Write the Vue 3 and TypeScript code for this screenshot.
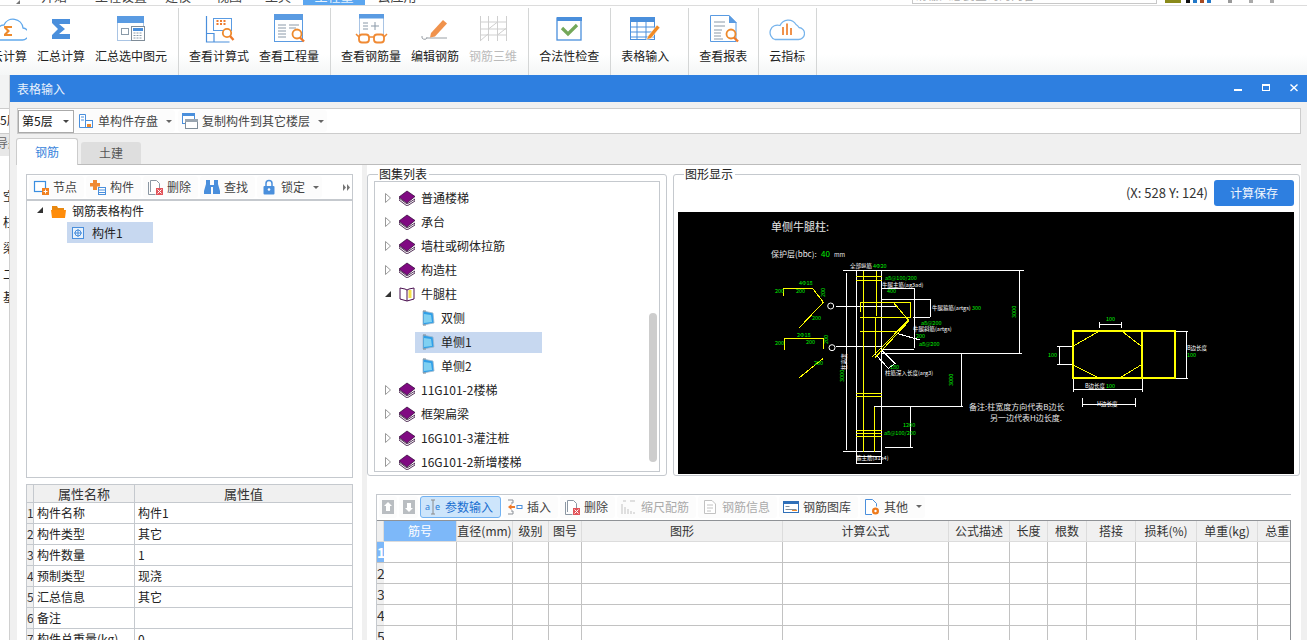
<script setup lang="ts">
const menu = [
  { t: '开始', w: 58 }, { t: '工程设置', w: 76 }, { t: '建模', w: 38 }, { t: '视图', w: 64 },
  { t: '工具', w: 34 }, { t: '工程量', w: 62, active: true }, { t: '云应用', w: 64 },
]
const sideChars = [
  { c: '空', k: 'a' }, { c: '柱', k: 'b' }, { c: '梁', k: 'c' }, { c: '二', k: 'd' }, { c: '基', k: 'e' },
]
const tree = [
  { t: '普通楼梯' }, { t: '承台' }, { t: '墙柱或砌体拉筋' }, { t: '构造柱' },
  { t: '牛腿柱', open: true },
  { t: '双侧', child: true }, { t: '单侧1', child: true, sel: true }, { t: '单侧2', child: true },
  { t: '11G101-2楼梯' }, { t: '框架扁梁' }, { t: '16G101-3灌注桩' }, { t: '16G101-2新增楼梯' },
]
const props = [
  ['构件名称', '构件1'], ['构件类型', '其它'], ['构件数量', '1'], ['预制类型', '现浇'],
  ['汇总信息', '其它'], ['备注', ''], ['构件总重量(kg)', '0'],
]
const cols = ['筋号', '直径(mm)', '级别', '图号', '图形', '计算公式', '公式描述', '长度', '根数', '搭接', '损耗(%)', '单重(kg)', '总重(kg)']
const rows = [1, 2, 3, 4, 5]

// CAD geometry is measured on the reference at 3x, relative to an origin
const conv = (ox: number, oy: number, p: number[]) => {
  const out: string[] = []
  for (let i = 0; i < p.length; i += 2) out.push(`${ox + p[i] / 3},${oy + p[i + 1] / 3}`)
  return out.join(' ')
}
const A = (p: number[]) => conv(750, 205, p)
const B = (p: number[]) => conv(1040, 170, p)
const white = [
  A([280,197,822,197]), A([808,197,808,445]), A([395,445,815,445]), A([290,203,290,735]), A([280,740,395,740]),
  A([319,197,319,775]), A([395,197,395,775]), A([319,755,395,755]), A([319,775,395,775]),
  A([395,250,493,250,493,430]), A([395,433,493,433]), A([395,283,540,283,540,335]), A([490,337,540,337]),
  A([258,303,440,303]), A([258,424,395,424]), A([440,385,510,405]), A([395,435,435,475,415,490,375,447]),
  A([373,605,640,605]), A([634,445,634,605]), A([481,605,481,727]), A([405,727,488,727]),
  B([178,463,244,463]), B([178,455,178,475]), B([244,455,244,475]),
  B([52,528,100,528]), B([52,582,100,582]), B([58,528,58,582]),
  B([408,484,445,484]), B([408,624,445,624]), B([440,484,440,624]),
  B([100,658,307,658]), B([100,626,100,665]), B([307,626,307,665]),
  B([128,703,287,703]), B([128,685,128,710]), B([287,685,287,710]),
]
const yellow = [
  A([341,197,341,740]), A([379,197,379,332]), A([376,335,376,445]), A([373,605,373,740]),
  A([319,215,395,215]), A([319,225,395,225]), A([319,565,395,565]), A([319,575,395,575]),
  A([319,675,395,675]), A([319,685,395,685]), A([319,695,395,695]),
  A([331,322,331,292,482,292,482,340]), A([331,338,482,338]), A([331,380,440,380]),
  A([430,292,475,345,368,455]), A([478,347,375,458]),
  A([100,272,100,250,188,250,220,292,148,368]), A([103,435,103,400,220,400,220,432]), A([220,460,148,518]),
  B([100,528,175,485]), B([248,485,303,528]), B([100,585,175,623]), B([240,623,303,585]),
]
const g = 'lg'
const w = 'lw'
const labels = [
  { x: 850, y: 268, c: w, t: '全部纵筋' }, { x: 873, y: 268, c: g, t: '4Φ20' },
  { x: 885, y: 280, c: g, t: 'a8@100/200' }, { x: 882, y: 287, c: w, t: '牛腿主筋(ag3ad)' },
  { x: 887, y: 293, c: g, t: '400' }, { x: 932, y: 310, c: w, t: '牛腿箍筋(artgs)' }, { x: 972, y: 310, c: g, t: '300' },
  { x: 921, y: 325, c: g, t: 'a8@200' }, { x: 913, y: 331, c: w, t: '牛腿斜筋(artgs)' },
  { x: 916, y: 338, c: g, t: '200' }, { x: 919, y: 346, c: g, t: 'a8@200' },
  { x: 885, y: 375, c: w, t: '柱筋深入长度(arg3)' }, { x: 890, y: 369, c: g, t: '180' },
  { x: 903, y: 427, c: g, t: '1200' }, { x: 884, y: 435, c: g, t: 'a8@100/200' }, { x: 856, y: 460, c: w, t: '箍主筋(a1a4)' },
  { x: 799, y: 285, c: g, t: '4Φ18' }, { x: 775, y: 293, c: g, t: '200' }, { x: 796, y: 293, c: g, t: '200' },
  { x: 812, y: 320, c: g, t: '200' }, { x: 797, y: 337, c: g, t: '2Φ18' }, { x: 775, y: 345, c: g, t: '200' },
  { x: 806, y: 344, c: g, t: '200' }, { x: 814, y: 365, c: g, t: '200' },
  { x: 1106, y: 321, c: g, t: '100' }, { x: 1048, y: 357, c: g, t: '100' }, { x: 1187, y: 350, c: w, t: 'B边长度' },
  { x: 1187, y: 357, c: g, t: '100' }, { x: 1085, y: 388, c: w, t: 'B边长度' }, { x: 1106, y: 388, c: g, t: '100' },
  { x: 1097, y: 406, c: w, t: 'H边长度' },
]
const vlabels = [
  { x: 1016, y: 318, c: g, t: '3000' }, { x: 953, y: 386, c: g, t: '3000' }, { x: 844, y: 382, c: g, t: '3000' },
  { x: 846, y: 370, c: w, t: '柱高度' }, { x: 825, y: 297, c: g, t: '200' }, { x: 828, y: 344, c: g, t: '200' },
]
</script>

<template>
  <div class="app">
    <div class="menu">
      <div class="corner"><i></i></div>
      <div v-for="m in menu" :key="m.t" class="mtab" :class="{ on: m.active }" :style="{ width: m.w + 'px' }"><span>{{ m.t }}</span></div>
      <div class="search"><span>请输入想要查询的内容</span></div>
      <div class="tray"><i class="o"></i><i class="k"></i><i class="b"></i><i class="r"></i><i class="b"></i><i class="g"></i><i class="g2"></i><i class="g2"></i></div>
    </div>

    <div class="ribbon">
      <section class="rgroup">
        <div class="ri"><svg width="36" height="32" viewBox="0 0 36 32"><path d="M7 27h24a6 6 0 0 0 1-12 10 10 0 0 0-19-3 7 7 0 0 0-5 2 7 7 0 0 0-1 13z" fill="#fff" stroke="#62a9ec" stroke-width="1.3"/><path d="M13 13h8v2h-5l3 3-3 3h5v2h-8v-2l3-3-3-3z" fill="#ee8a2c"/></svg><span>云计算</span></div>
        <div class="ri"><svg width="36" height="32" viewBox="0 0 36 32"><polygon points="9,6 27,6 27,11 16,11 22,16 16,21 27,21 27,26 9,26 9,22 15,16 9,10" fill="#4a8fdc"/></svg><span>汇总计算</span></div>
        <div class="ri"><svg width="36" height="32" viewBox="0 0 36 32"><rect x="4.5" y="3.500" width="26" height="24" fill="#fff" stroke="#a9c4e4"/><rect x="4" y="3" width="27" height="7" fill="#5a9be2"/><rect x="8.500" y="15.500" width="7" height="6" fill="none" stroke="#8a9aa8"/><rect x="18.500" y="13.500" width="13" height="14" fill="#fff" stroke="#7f8c98"/><rect x="20" y="15" width="10" height="3" fill="#4a8fdc"/><path d="M20.500 20h9M20.500 22.500h9M20.500 25h9" stroke="#8a9aa8" stroke-dasharray="2 1"/></svg><span>汇总选中图元</span></div>
      </section>
      <section class="rgroup">
        <div class="ri"><svg width="36" height="32" viewBox="0 0 36 32"><path d="M5.500 3v26h23M5.500 20.500h7.500v8" fill="none" stroke="#4a8fdc" stroke-width="1.2"/><rect x="12.500" y="5.500" width="18" height="12" fill="#fff" stroke="#5a9be2"/><path d="M15.500 8h2m1.500 0h2m1.500 0h2m-9 3h2m1.500 0h2m1.500 0h2" stroke="#ee7a2c" stroke-width="2"/><circle cx="26" cy="20" r="4.200" fill="#fff" stroke="#ee8a2c" stroke-width="1.800"/><path d="M29 23l3.500 4" stroke="#ee7a2c" stroke-width="2.400"/></svg><span>查看计算式</span></div>
        <div class="ri"><svg width="36" height="32" viewBox="0 0 36 32"><rect x="3.500" y="2.500" width="28" height="26" fill="#fff" stroke="#5a9be2"/><rect x="3" y="1" width="29" height="6" fill="#5a9be2"/><path d="M7 12h8M7 15h8M7 18h8M7 21h8M7 24h8M18 12h10M18 15h7" stroke="#8a99a8"/><circle cx="26" cy="21" r="4.500" fill="#fff" stroke="#ee8a2c" stroke-width="1.800"/><path d="M29 24.500l4 4" stroke="#ee7a2c" stroke-width="2.400"/></svg><span>查看工程量</span></div>
      </section>
      <section class="rgroup">
        <div class="ri"><svg width="36" height="32" viewBox="0 0 36 32"><path d="M6.500 22V4.500h24V22" fill="#fff" stroke="#a9c4e4"/><rect x="6" y="1" width="25" height="4.500" fill="#5a9be2"/><path d="M10 10h5M10 13h5M10 16h5M22 9v8M18 13h8" stroke="#8a99a8"/><rect x="6" y="21.500" width="10" height="8" rx="3" fill="#fff" stroke="#f08a34" stroke-width="1.800"/><rect x="21" y="21.500" width="10" height="8" rx="3" fill="#fff" stroke="#f08a34" stroke-width="1.800"/><path d="M16 24h5M6 24l-3 -3M31 24l3 -3" stroke="#f08a34" stroke-width="1.500" fill="none"/></svg><span>查看钢筋量</span></div>
        <div class="ri"><svg width="36" height="32" viewBox="0 0 36 32"><path d="M5 23a2.500 2.500 0 0 0 5 1.500M9 25h21" fill="none" stroke="#9aa0a6"/><path d="M14 20l12-13 4 3.500L18 23.500l-5 1z" fill="#f0924c"/></svg><span>编辑钢筋</span></div>
        <div class="ri dis"><svg width="36" height="32" viewBox="0 0 36 32"><path d="M5.500 3v25M13.500 3v25M22.500 3v25M31.500 3v25M5.500 9h26M5.500 16h26M5.500 22h26M5 28l8-7M13.500 16l9-7M22.500 22l9-7" stroke="#cfcfcf" fill="none"/></svg><span>钢筋三维</span></div>
      </section>
      <section class="rgroup">
        <div class="ri"><svg width="36" height="32" viewBox="0 0 36 32"><rect x="6" y="5" width="24" height="22" fill="#fff" stroke="#4a8fdc" stroke-width="1.300"/><rect x="6" y="4" width="25" height="4" fill="#4a8fdc"/><path d="M11 15l6 6 9-9" fill="none" stroke="#74a85a" stroke-width="3.200"/></svg><span>合法性检查</span></div>
      </section>
      <section class="rgroup wide">
        <div class="ri"><svg width="36" height="32" viewBox="0 0 36 32"><rect x="3.500" y="4.500" width="24" height="22" fill="#fff" stroke="#4a8fdc"/><rect x="3" y="4" width="25" height="5" fill="#4a8fdc"/><path d="M3 14h25M3 19h25M3 24h25M10 9v18M19 9v18" stroke="#4a8fdc"/><path d="M21 23l9-11 3 2.500-9 11-4.500 1z" fill="#f08a24" stroke="#fff" stroke-width=".6"/></svg><span>表格输入</span></div>
      </section>
      <section class="rgroup">
        <div class="ri"><svg width="36" height="32" viewBox="0 0 36 32"><path d="M5.500 2.500H24l7 7v19H5.500z" fill="#fff" stroke="#5a9be2"/><path d="M24 2v8h8z" fill="#5a9be2"/><path d="M9 9h11M9 13h11M9 17h8M9 20h7M9 23h7M9 26h9" stroke="#8a99a8"/><circle cx="26" cy="21" r="4.500" fill="#fff" stroke="#ee8a2c" stroke-width="1.800"/><path d="M29 24.500l4 4" stroke="#ee7a2c" stroke-width="2.400"/></svg><span>查看报表</span></div>
      </section>
      <section class="rgroup">
        <div class="ri"><svg width="36" height="32" viewBox="0 0 36 32"><path d="M6 26.500h23a6 6 0 0 0 1-12 8 8 0 0 0-3-3 9 9 0 0 0-16 1 7 7 0 0 0-5 14z" fill="#fff" stroke="#77b4ec" stroke-width="1.300"/><path d="M14 14v8M18 10.500v11.500M22 15v7" stroke="#f0924c" stroke-width="2"/></svg><span>云指标</span></div>
      </section>
    </div>

    <div class="backside">
      <div class="bs-top"></div>
      <div class="bs-select">5层</div>
      <div class="bs-nav">导航</div>
      <div class="bs-list">
        <div v-for="s in sideChars" :key="s.k" class="bs-char" :class="s.k">{{ s.c }}</div>
      </div>
    </div>

    <div class="window">
      <header class="titlebar">
        <span>表格输入</span>
        <div class="winctl">
          <svg width="8" height="8" viewBox="0 0 8 8"><rect x="0" y="5" width="8" height="2" fill="#fff"/></svg>
          <svg width="8" height="8" viewBox="0 0 8 8"><rect x=".5" y=".5" width="7" height="6" fill="none" stroke="#fff"/><rect x="0" y="0" width="8" height="2" fill="#fff"/></svg>
          <svg width="8" height="8" viewBox="0 0 8 8"><path d="M.5.500l7 6.500M7.500.500l-7 6.500" stroke="#fff" stroke-width="1.400"/></svg>
        </div>
      </header>
      <div class="winbody">
        <div class="floorbar">
          <div class="floor">第5层<i class="caret dark"></i></div>
          <div class="tbtn has-caret first">
            <svg width="16" height="16" viewBox="0 0 16 16"><path d="M1.500 1.500h6v13h-6zM3 4h3M3 7h3" fill="#fff" stroke="#4a8fdc"/><rect x="7.500" y="7.500" width="7" height="7" fill="#fff" stroke="#4a8fdc"/><rect x="9" y="11" width="4" height="3" fill="#ee8a2c"/></svg>
            <span>单构件存盘</span><i class="caret"></i>
          </div>
          <div class="tbtn has-caret second">
            <svg width="16" height="16" viewBox="0 0 16 16"><rect x=".5" y=".5" width="12" height="10" fill="#fff" stroke="#4a8fdc"/><rect x="0" y="0" width="13" height="3" fill="#4a8fdc"/><rect x="3.500" y="6.500" width="12" height="9" fill="#fff" stroke="#7f8c98"/><rect x="3" y="6" width="13" height="3" fill="#9aa5b0"/></svg>
            <span>复制构件到其它楼层</span><i class="caret"></i>
          </div>
        </div>

        <div class="tabs">
          <div class="tab on">钢筋</div>
          <div class="tab">土建</div>
        </div>

        <main class="main">
          <aside class="left">
            <div class="treepanel">
              <div class="toolbar">
                <div class="tbtn"><svg width="16" height="16" viewBox="0 0 16 16"><rect x="1.500" y="2.500" width="11" height="10" fill="#fff" stroke="#3a8ee0" stroke-width="1.200"/><rect x="9" y="9" width="7" height="7" fill="#f08020"/><path d="M12.500 10.500v4M10.500 12.500h4" stroke="#fff"/></svg><span>节点</span></div>
                <div class="tbtn"><svg width="16" height="16" viewBox="0 0 16 16"><path d="M3 1h4v3h3v3.500H7V11H3V7.500H0V4h3z" fill="#f08a34"/><rect x="8.500" y="8.500" width="7" height="7" fill="#fff" stroke="#4a8fdc"/><path d="M9 11h6M9 13.500h6" stroke="#4a8fdc"/></svg><span>构件</span></div>
                <div class="tbtn"><svg width="16" height="16" viewBox="0 0 16 16"><path d="M3.500 13V1.500h6l3 3V9" fill="#fff" stroke="#8b97a3"/><path d="M1.500 3v12.500h7" fill="none" stroke="#8b97a3"/><rect x="9" y="9" width="7" height="7" fill="#e2545a"/><path d="M10.500 10.500l4 4M14.500 10.500l-4 4" stroke="#fff"/></svg><span>删除</span></div>
                <div class="tbtn"><svg width="16" height="16" viewBox="0 0 16 16"><path d="M2 1h4v5h4V1h4v4l2 7v3H9V8H7v7H0v-3l2-7z" fill="#4a8fdc"/></svg><span>查找</span></div>
                <div class="tbtn has-caret"><svg width="16" height="16" viewBox="0 0 16 16"><path d="M5 7V4.500a3 3 0 0 1 6 0V7" fill="none" stroke="#4a8fdc" stroke-width="1.500"/><rect x="2.500" y="7" width="11" height="8.500" rx="1" fill="#4a8fdc"/><circle cx="8" cy="10.500" r="1.300" fill="#fff"/></svg><span>锁定</span><i class="caret"></i></div>
                <svg class="more" width="7" height="7" viewBox="0 0 7 7"><path d="M0 0l3 3.500L0 7zM4 0l3 3.500L4 7z" fill="#777"/></svg>
              </div>
              <div class="ltree">
                <div class="lroot">
                  <svg class="arrowbox" width="14" height="8" viewBox="0 0 14 8"><path d="M6 0v6H0z" fill="#333"/></svg>
                  <svg width="15" height="13" viewBox="0 0 15 13"><path d="M1 1h5l1 2h6v3H1z" fill="#e88810"/><path d="M0 5h15l-1 8H1z" fill="#ff8c0a"/></svg>
                  <span>钢筋表格构件</span>
                </div>
                <div class="lchild">
                  <svg width="12" height="12" viewBox="0 0 12 12"><rect x=".5" y=".5" width="11" height="11" fill="#e8f2fc" stroke="#4a8fdc"/><circle cx="6" cy="6" r="3" fill="none" stroke="#4a8fdc"/><path d="M6 2v8M2 6h8" stroke="#4a8fdc"/></svg>
                  <span>构件1</span>
                </div>
              </div>
            </div>
            <div class="ptable">
              <div class="pc idx head"></div><div class="pc head center">属性名称</div><div class="pc head center">属性值</div>
              <template v-for="(p, i) in props" :key="p[0]">
                <div class="pc idx">{{ i + 1 }}</div>
                <div class="pc">{{ p[0] }}</div>
                <div class="pc">{{ p[1] }}</div>
              </template>
            </div>
          </aside>

          <div class="splitter"></div>

          <div class="right">
            <div class="toprow">
              <div class="group list">
                <div class="legend">图集列表</div>
                <div class="treebox">
                  <template v-for="n in tree" :key="n.t">
                    <div v-if="n.child" class="crow">
                      <div class="cinner" :class="{ sel: n.sel }">
                        <svg width="14" height="16" viewBox="0 0 14 16"><path d="M2 1l10 2 1 10-11 2z" fill="#2f9fe8" stroke="#9fb7cc" stroke-width=".8"/><path d="M3 4l7 1 1 7-8 1z" fill="#7fd0f2"/><path d="M2 1h3M2 15h3" stroke="#7a8a98"/></svg>
                        <span>{{ n.t }}</span>
                      </div>
                    </div>
                    <div v-else class="trow">
                      <svg v-if="n.open" class="arr" width="14" height="8" viewBox="0 0 14 8"><path d="M6 1v6H0z" fill="#333"/></svg>
                      <svg v-else class="arr" width="14" height="10" viewBox="0 0 14 10"><path d="M.5.500l5 4.500-5 4.500z" fill="#fff" stroke="#999"/></svg>
                      <svg v-if="n.open" width="16" height="16" viewBox="0 0 16 16"><path d="M1 2l5 1 2 1 2-1 5-1v11l-7 2-7-2z" fill="#fff" stroke="#4a1050"/><path d="M8 4v11" stroke="#4a1050"/><rect x="9.500" y="4" width="3" height="8" fill="#f4df4a"/></svg>
                      <svg v-else width="16" height="16" viewBox="0 0 16 16"><path d="M0 8l8 6 8-5v2l-8 5-8-6z" fill="#fff" stroke="#2a0030" stroke-width=".8"/><path d="M8 1l8 5.500-8 6.500-8-6z" fill="#800a82" stroke="#2a0030" stroke-width=".7"/></svg>
                      <span>{{ n.t }}</span>
                    </div>
                  </template>
                  <div class="vscroll"></div>
                </div>
              </div>
              <div class="group shape">
                <div class="legend">图形显示</div>
                <div class="coordrow">
                  <span>(X: 528 Y: 124)</span>
                  <button class="calc">计算保存</button>
                </div>
                <svg class="cad" width="616" height="262" viewBox="678 212 616 262">
                  <g shape-rendering="crispEdges">
                    <polyline v-for="p in white" :key="p" :points="p" fill="none" stroke="#fff" stroke-width="1"/>
                    <polyline v-for="p in yellow" :key="p" :points="p" fill="none" stroke="#ff0" stroke-width="1"/>
                    <rect x="1073" y="331" width="102" height="46.500" fill="none" stroke="#ff0" stroke-width="2"/>
                    <path d="M1141.700 331v46.500" stroke="#ff0" stroke-width="2"/>
                  </g>
                  <circle cx="830.700" cy="306" r="3" fill="none" stroke="#fff"/>
                  <circle cx="832" cy="347.700" r="3" fill="none" stroke="#fff"/>
                  <text x="771" y="231" class="ct big">单侧牛腿柱:</text>
                  <text x="771" y="257" class="ct mid">保护层(bbc):</text>
                  <text x="821" y="257" class="ct mid lg">40</text>
                  <text x="834" y="257" class="ct sm">mm</text>
                  <text x="969" y="410" class="ct mid">备注:柱宽度方向代表B边长</text>
                  <text x="990" y="421" class="ct mid">另一边代表H边长度.</text>
                  <text v-for="l in labels" :key="l.x + '-' + l.y" :x="l.x" :y="l.y" class="ct tiny" :class="l.c">{{ l.t }}</text>
                  <text v-for="l in vlabels" :key="l.x + '-' + l.y" :x="l.x" :y="l.y" class="ct tiny" :class="l.c" :transform="`rotate(-90 ${l.x} ${l.y})`">{{ l.t }}</text>
                </svg>
              </div>
            </div>

            <div class="barpanel">
              <div class="toolbar bar">
                <div class="tbtn ud up"><svg width="12" height="14" viewBox="0 0 12 14"><rect width="12" height="14" fill="#b9bdc1"/><path d="M6 2l4 4H8v5H4V6H2z" fill="#fff"/></svg></div>
                <div class="tbtn ud dn"><svg width="12" height="14" viewBox="0 0 12 14"><rect width="12" height="14" fill="#b9bdc1"/><path d="M6 12l4-4H8V3H4v5H2z" fill="#fff"/></svg></div>
                <div class="tbtn active"><svg width="16" height="16" viewBox="0 0 16 16"><path d="M8 1v14M6 1h4M6 15h4" stroke="#8a8a8a" fill="none"/><text x="0" y="11" class="ae">a</text><text x="10" y="11" class="ae">e</text></svg><span>参数输入</span></div>
                <div class="tbtn"><svg width="16" height="16" viewBox="0 0 16 16"><path d="M1 1h5v3H4M4 12h2v3H1" fill="none" stroke="#8a8f96"/><path d="M1 8l3.500-3v2H8v2H4.500v2z" fill="#ee7a2c"/><rect x="10" y="6.500" width="5" height="3" fill="#fff" stroke="#4a8fdc"/></svg><span>插入</span></div>
                <div class="tbtn"><svg width="16" height="16" viewBox="0 0 16 16"><path d="M3.500 13V1.500h6l3 3V9" fill="#fff" stroke="#8b97a3"/><path d="M1.500 3v12.500h7" fill="none" stroke="#8b97a3"/><rect x="9" y="9" width="7" height="7" fill="#e2545a"/><path d="M10.500 10.500l4 4M14.500 10.500l-4 4" stroke="#fff"/></svg><span>删除</span></div>
                <div class="tbtn off"><svg width="16" height="16" viewBox="0 0 16 16"><path d="M2 2h3M9 2h5M1 5v10M4 8v7M7 10v5M10 12v3M13 13v2" stroke="#c2c2c2" fill="none"/></svg><span>缩尺配筋</span></div>
                <div class="tbtn off"><svg width="16" height="16" viewBox="0 0 16 16"><path d="M2.500 1.500H10l3.500 3.500v9.500h-11z" fill="#fff" stroke="#c2c2c2"/><path d="M5 6h6M5 9h6M5 12h4" stroke="#c2c2c2"/></svg><span>钢筋信息</span></div>
                <div class="tbtn"><svg width="16" height="16" viewBox="0 0 16 16"><rect x=".5" y="2.500" width="15" height="11" fill="#fff" stroke="#2f6fb8"/><rect x="0" y="2" width="16" height="3" fill="#2f6fb8"/><path d="M2.500 7.500h4M2.500 10.500h11" stroke="#7f8c98"/><path d="M9 11.500h5" stroke="#ee8a2c"/></svg><span>钢筋图库</span></div>
                <div class="tbtn has-caret"><svg width="16" height="16" viewBox="0 0 16 16"><path d="M8 15.500H1.500V.5h7l4 4v3" fill="#fff" stroke="#4a8fdc"/><circle cx="11.500" cy="12" r="3.500" fill="#ee7a1c"/><circle cx="11.500" cy="12" r="1.200" fill="#fff"/></svg><span>其他</span><i class="caret"></i></div>
              </div>
              <div class="gridwrap">
                <div class="grid">
                  <div class="gh"></div>
                  <div v-for="(c, i) in cols" :key="c" class="gh" :class="{ hot: i === 0 }">{{ c }}</div>
                  <template v-for="r in rows" :key="r">
                    <div class="gn" :class="{ hot: r === 1 }">{{ r }}</div>
                    <div v-for="c in cols" :key="c + r" class="gc"></div>
                  </template>
                </div>
              </div>
            </div>
          </div>
        </main>
      </div>
    </div>
  </div>
</template>

<style>
html, body { margin: 0; padding: 0; background: #fff; overflow: hidden; }
</style>

<style scoped>
.app { position: relative; width: 1307px; height: 640px; overflow: hidden; background: #fff; font: 12px/16px "Noto Sans CJK SC", "Noto Sans", sans-serif; color: #222; }
.menu { display: flex; height: 5px; border-bottom: 1px solid #dcdcdc; overflow: hidden; }
.corner { width: 25px; position: relative; }
.menu .corner i { position: absolute; left: 16px; top: 0; width: 0; height: 0; border-left: 4px solid transparent; border-bottom: 4px solid #777; }
.mtab { flex: none; height: 5px; overflow: hidden; text-align: center; font-size: 13px; color: #444; }
.mtab span { display: block; margin-top: -12px; }
.mtab.on { margin-left: 8px; background: #5ba6f0; color: #e8f2fc; }
.search { margin-left: 483px; width: 243px; height: 3px; border: 1px solid #c8c8c8; border-top: 0; overflow: hidden; color: #aaa; flex: none; font-size: 12px; }
.search span { display: block; margin-top: -13px; padding-left: 2px; }
.tray { display: flex; gap: 3px; margin-left: 8px; }
.tray i { display: block; height: 3px; width: 4px; }
.tray .o { width: 16px; background: #8a8a1a; margin-right: 2px; }
.tray .k { background: #111; }
.tray .b { background: #2278c8; }
.tray .r { background: #a84a20; }
.tray .g { background: #999; margin-left: 14px; }
.tray .g2 { background: #aaa; margin-left: 14px; }

.ribbon { display: flex; height: 69px; margin-left: -19px; background: linear-gradient(#fff 0, #fff 70%, #f4f6f6 100%); }
.rgroup { display: flex; gap: 10px; padding: 2px 11px 0 10px; margin-top: 2px; border-right: 1px solid #d4d6d6; }
.rgroup.wide { padding-right: 19px; }
.ri { display: flex; flex-direction: column; align-items: center; padding-top: 3px; }
.ri svg { display: block; margin-bottom: 3px; }
.ri span { white-space: nowrap; color: #222; }
.ri.dis span { color: #bbb; }

.backside { position: absolute; left: 0; top: 75px; width: 9px; bottom: 0; background: #fff; overflow: hidden; }
.bs-top { height: 33px; background: #f2f3f3; }
.bs-select { height: 26px; line-height: 22px; white-space: nowrap; border-top: 1px solid #ccc; border-bottom: 1px solid #ccc; box-sizing: border-box; }
.bs-nav { height: 22px; background: #e8e8e8; color: #666; white-space: nowrap; line-height: 18px; margin-left: -4px; }
.bs-list { padding: 32px 0 0 3px; }
.bs-char { white-space: nowrap; height: 26px; line-height: 16px; }
.bs-char.d { height: 23px; }

.window { position: absolute; left: 9px; top: 75px; right: 0; bottom: 0; display: flex; flex-direction: column; background: #f0f0f0; border-left: 1px solid #d0d0d0; }
.titlebar { display: flex; align-items: center; justify-content: space-between; flex: none; height: 27px; padding-left: 7px; background: #2e7fe0; color: #e8f1fc; }
.winctl { display: flex; gap: 20px; padding-right: 9px; margin-top: -2px; }
.winbody { flex: 1; min-height: 0; padding: 6px 6px 0 7px; display: flex; flex-direction: column; }

.floorbar { display: flex; align-items: center; height: 26px; flex: none; box-sizing: border-box; border: 1px solid #ccc; background: #fff; }
.floor { display: flex; align-items: center; box-sizing: border-box; width: 56px; height: 23px; padding-left: 3px; border: 1px solid #aaa; color: #111; position: relative; }
.tbtn { display: flex; align-items: center; gap: 4px; padding: 0 7px 0 4px; height: 22px; flex: none; background: #fcfcfc; border-radius: 3px; color: #444; white-space: nowrap; }
.tbtn svg { display: block; flex: none; }
.has-caret { padding-right: 3px; }
.second { margin-left: 3px; }
.caret { display: block; width: 0; height: 0; margin-left: 4px; border: 3px solid transparent; border-top: 3px solid #666; border-bottom: 0; }
.caret.dark { position: absolute; right: 4px; top: 9px; margin: 0; border-top-color: #444; }

.tabs { display: flex; flex: none; align-items: flex-end; gap: 3px; height: 31px; margin-left: -1px; border-bottom: 1px solid #bcbcbc; box-sizing: border-box; }
.tab { width: 60px; height: 22px; line-height: 22px; text-align: center; background: #dedede; color: #555; border-radius: 3px 3px 0 0; }
.tab.on { height: 26px; line-height: 26px; background: #fff; color: #3a85dc; border: 1px solid #ccc; border-bottom: 0; position: relative; margin-bottom: -1px; }

.main { flex: 1; min-height: 0; display: flex; background: #fff; overflow: hidden; }
.left { flex: none; width: 345px; box-sizing: border-box; padding: 9px 9px 0; }
.treepanel { height: 304px; box-sizing: border-box; border: 1px solid #c5c9ce; }
.toolbar { display: flex; align-items: center; gap: 2px; height: 24px; padding-left: 2px; border-bottom: 2px solid #c5c9ce; }
.more { margin-left: auto; margin-right: 2px; display: block; }
.ltree { padding-left: 10px; }
.lroot { display: flex; align-items: center; height: 20px; color: #222; }
.arrowbox { flex: none; display: block; }
.lroot svg:nth-child(2) { margin-right: 6px; }
.lchild { display: flex; align-items: center; gap: 8px; box-sizing: border-box; width: 86px; height: 21px; margin: 1px 0 0 30px; padding-left: 5px; background: #c7d8f0; }

.ptable { display: grid; grid-template-columns: 7px 101px 1fr; grid-template-rows: 18px; grid-auto-rows: 21px; margin-top: 6px; border-top: 1px solid #c5c9ce; border-left: 1px solid #c5c9ce; border-right: 1px solid #c5c9ce; }
.pc { box-sizing: border-box; padding-left: 3px; line-height: 20px; border-bottom: 1px solid #c5c9ce; border-right: 1px solid #c5c9ce; white-space: nowrap; overflow: hidden; color: #222; }
.pc:nth-child(3n) { border-right: 0; }
.pc.idx { padding-left: 0; background: #f0f0f0; text-align: center; color: #333; }
.pc.head { line-height: 17px; background: #f0f0f0; font-size: 13px; color: #333; }
.pc.center { text-align: center; padding: 0; }

.splitter { flex: none; width: 5px; background: #f0f0f0; }
.right { flex: 1; min-width: 0; }
.toprow { display: flex; gap: 6px; padding-top: 9px; }
.group { position: relative; height: 302px; box-sizing: border-box; border: 1px solid #c5c9ce; border-radius: 3px; }
.group.list { width: 300px; padding: 6px 6px 0; }
.group.shape { width: 627px; padding: 5px 4px 0; }
.legend { position: absolute; left: 10px; top: -9px; padding: 0 2px 0 1px; background: #fff; line-height: 16px; color: #222; }
.treebox { position: relative; box-sizing: border-box; height: 291px; border: 1px solid #c5c9ce; padding-top: 4px; overflow: hidden; }
.trow { display: flex; align-items: center; height: 24px; padding-left: 10px; }
.arr { flex: none; display: block; }
.trow svg:nth-child(2) { margin-right: 6px; display: block; }
.crow { display: flex; align-items: center; height: 24px; padding-left: 40px; }
.cinner { display: flex; align-items: center; gap: 6px; box-sizing: border-box; width: 127px; height: 21px; padding-left: 6px; }
.cinner.sel { background: #c7d8f0; }
.vscroll { position: absolute; left: 274px; top: 131px; width: 8px; height: 149px; border-radius: 4px; background: #cdcdcd; }
.coordrow { display: flex; align-items: center; justify-content: flex-end; gap: 6px; height: 26px; padding-right: 1px; color: #333; font-size: 13px; }
.calc { width: 80px; height: 26px; border: 0; padding: 0; border-radius: 3px; background: #2e7fe0; color: #f2f7fd; font: 12px/26px "Noto Sans CJK SC", sans-serif; }
.cad { display: block; margin-top: 6px; background: #000; }
.ct { font-family: "Noto Sans CJK SC", "Noto Sans", sans-serif; fill: #e6e6e6; }
.big { font-size: 11px; }
.mid { font-size: 8px; }
.sm { font-size: 6px; }
.tiny { font-size: 5.500px; }
.ct.lg { fill: #00f000; }
.ct.lw { fill: #ffffff; }
.ae { font-size: 9px; fill: #2a7fd8; font-family: "Noto Sans", sans-serif; }

.barpanel { width: 915px; margin: 18px 0 0 9px; box-sizing: border-box; border-top: 1px solid #c5c9ce; border-left: 1px solid #c5c9ce; }
.toolbar.bar { border-bottom: 0; height: 25px; padding-bottom: 2px; box-sizing: border-box; }
.tbtn.ud { padding: 0 3px; width: 18px; box-sizing: border-box; }
.tbtn.dn { padding: 0 3px 0 4px; width: 19px; }
.tbtn.active { box-sizing: border-box; border: 1px solid #72b2f2; background: #cde5fb; color: #1a6fd0; }
.tbtn.off { color: #aaa; }
.gridwrap { overflow: hidden; border-top: 1px solid #8f9296; border-right: 1px solid #8f9296; }
.grid { display: grid; width: 942px; grid-template-columns: 7px 73px 56px 36px 33px 201px 166px 61px 38px 39px 49px 61px 61px 61px; grid-template-rows: 21px; grid-auto-rows: 21px; }
.gh { box-sizing: border-box; line-height: 20px; text-align: center; white-space: nowrap; overflow: hidden; background: #f0f0f0; color: #333; border-right: 1px solid #dcdcdc; border-bottom: 1px solid #dcdcdc; }
.gh.hot { background: #7db8f9; color: #fff; }
.gn { box-sizing: border-box; background: #f0f0f0; color: #333; font-size: 14px; line-height: 20px; border-bottom: 1px solid #c2c2c2; overflow: hidden; }
.gn.hot { background: #7db8f9; color: #fff; font-weight: 700; }
.gc { box-sizing: border-box; border-right: 1px solid #c2c2c2; border-bottom: 1px solid #c2c2c2; }
</style>
